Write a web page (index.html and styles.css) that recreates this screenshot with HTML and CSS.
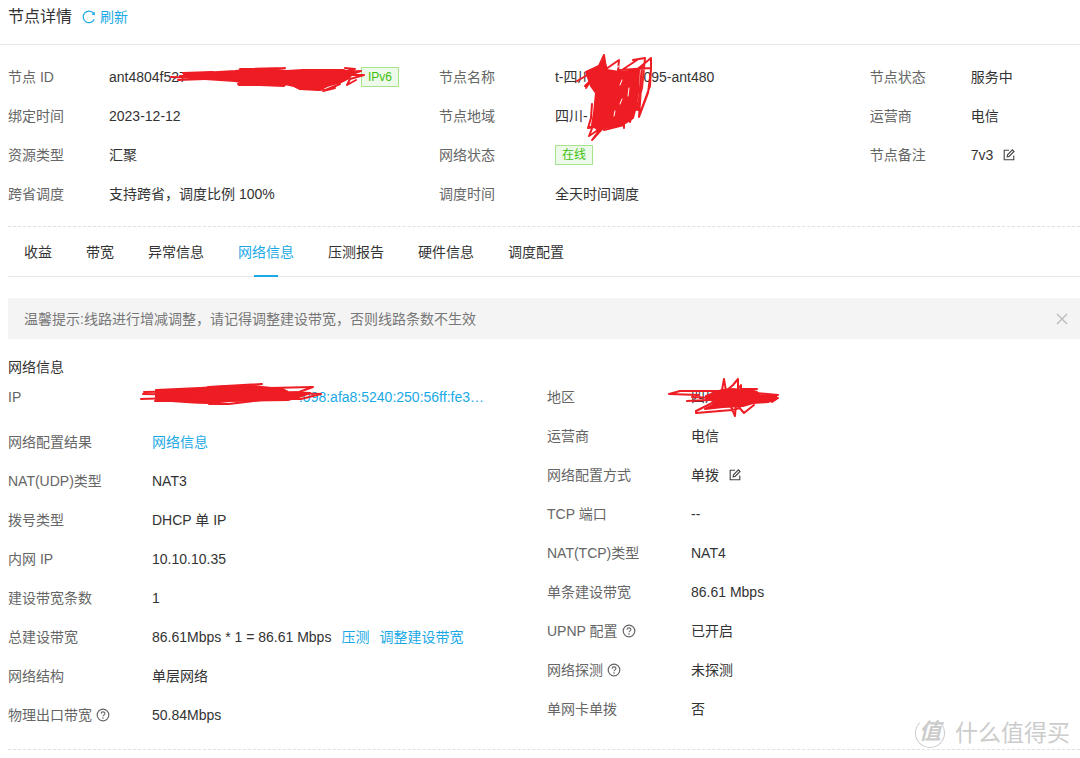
FILE: index.html
```html
<!DOCTYPE html>
<html lang="zh-CN">
<head>
    <meta charset="UTF-8">
    <meta name="viewport" content="width=device-width, initial-scale=1.0">
    <title>节点详情</title>
    <link rel="stylesheet" href="styles.css">
</head>
<body>
    <!-- 公用图标 -->
    <svg class="icons" aria-hidden="true">
        <symbol id="icon-edit" viewBox="0 0 12 12">
            <path d="M6 1.2H1.2v9.6h9.6V6.6M4.2 7.8l.3-2L9.4.9l1.6 1.6-4.9 4.9z" fill="none" stroke="currentColor" stroke-width="1.1"/>
        </symbol>
        <symbol id="icon-help" viewBox="0 0 14 14">
            <circle cx="7" cy="7" r="5.8" fill="none" stroke="currentColor" stroke-width="1.2"/>
            <path d="M5.1 5.7c0-2.5 3.8-2.4 3.8-.2 0 1.4-1.9 1.3-1.9 2.8" fill="none" stroke="currentColor" stroke-width="1.1"/>
            <circle cx="7" cy="10" r=".8" fill="currentColor"/>
        </symbol>
    </svg>

    <div class="page">
        <header class="header">
            <h1>节点详情</h1>
            <button type="button" class="refresh">
                <svg width="14" height="14" viewBox="0 0 14 14"><path d="M12.3 9.2A5.8 5.8 0 1 1 11.6 3.4" fill="none" stroke="currentColor" stroke-width="1.2"/><path d="M12.9 1.6v3.6L9.6 4.5z" fill="currentColor"/></svg>
                刷新
            </button>
        </header>

        <!-- 节点基本信息 -->
        <section class="base">
            <dl>
                <div class="row"><dt>节点 ID</dt><dd>
                    <span class="node-id">ant4804f527<svg class="scribble scribble-id" viewBox="168 60 200 36">
                        <path class="fill" d="M186 74l49-3 10-1 22-1 20 2 16-1 40 0 10 3-4 5-8 4-14 4-8 4-19-1-6-3-14-3-35 0-10-2-45-3-6-3z"/>
                        <path d="M171 77l28 1M183 73l30-1M178 80l54-2M180 76l50-3M240 69l45-1M250 71l35-3M345 68l10 1-12 3 18-1-12 4 15 0-14 4M238 84l46 2M245 82l-6 3 46 0M300 88l25 2 10-2-12 3 17-7-14 6M350 79l-3 6 9-5"/>
                    </svg></span>
                    <span class="tag">IPv6</span>
                </dd></div>
                <div class="row"><dt>绑定时间</dt><dd>2023-12-12</dd></div>
                <div class="row"><dt>资源类型</dt><dd>汇聚</dd></div>
                <div class="row"><dt>跨省调度</dt><dd>支持跨省，调度比例 100%</dd></div>
            </dl>
            <dl class="base-name">
                <div class="row"><dt>节点名称</dt><dd>
                    <span class="node-name"><span>t-四川</span><span>095-ant480</span><svg class="scribble scribble-name" viewBox="575 52 80 92">
                        <path class="fill" d="M586 72l13-6 5-6 3 10 12 2 20-2-1 22-3 18-2 8-6 4-6 3-10 2-14 2-5-4 2-12 2-20-5-7z"/>
                        <path d="M577 81l14-8 8-7 5-11 2 14 13-9-1 11M586 88l6-9-7 7M592 104l-1 14-3 10 5-2-4 10 12-8-9 12 11-12M619 70l32-2-1 18-11 30M634 72l17-14 0 12-3 23-9 24 2-29M633 60l12-2-3 30-6 22M619 72l18-12M642 66l-4 44M588 128l22-3M604 130l20-5-1-8M624 106v22M630 122l4-16"/>
                        <path class="gap" d="M619 66l-3 2M622 80l-2 5M622 99l-2 5M614 116l1-5M629 88l-1 8"/>
                    </svg></span>
                </dd></div>
                <div class="row"><dt>节点地域</dt><dd>四川-</dd></div>
                <div class="row"><dt>网络状态</dt><dd><span class="tag">在线</span></dd></div>
                <div class="row"><dt>调度时间</dt><dd>全天时间调度</dd></div>
            </dl>
            <dl>
                <div class="row"><dt>节点状态</dt><dd>服务中</dd></div>
                <div class="row"><dt>运营商</dt><dd>电信</dd></div>
                <div class="row"><dt>节点备注</dt><dd>7v3 <button type="button" class="edit" aria-label="编辑备注"><svg><use href="#icon-edit"/></svg></button></dd></div>
            </dl>
        </section>

        <!-- 选项卡 -->
        <nav class="tabs">
            <a href="#">收益</a>
            <a href="#">带宽</a>
            <a href="#">异常信息</a>
            <a href="#" class="active">网络信息</a>
            <a href="#">压测报告</a>
            <a href="#">硬件信息</a>
            <a href="#">调度配置</a>
        </nav>

        <div class="tip">
            <p>温馨提示:线路进行增减调整，请记得调整建设带宽，否则线路条数不生效</p>
            <button type="button" aria-label="关闭"><svg width="12" height="12" viewBox="0 0 12 12"><path d="M1 1l10 10M11 1L1 11" stroke="currentColor" stroke-width="1.4"/></svg></button>
        </div>

        <!-- 网络信息 -->
        <section class="network">
            <h2>网络信息</h2>
            <div class="cols">
                <dl>
                    <div class="row row-ip"><dt>IP</dt><dd>
                        <a href="#" class="ip">:098:afa8:5240:250:56ff:fe3…<svg class="scribble scribble-ip" viewBox="138 380 188 28">
                            <path class="fill" d="M156 390l44-2 32-2 30 1 20 2 6 3 22 1-8 3-14 4-58 1-20 2-24-1-30-2z"/>
                            <path d="M144 392l52-1M143 394l52 1M141 399l64-2M155 401l55 0M209 404l20 0 40-5M208 387l54-3-20 3M270 388l43-1-14 5-10 1 32 1-20 5-18 0M186 402l30 1"/>
                        </svg></a>
                    </dd></div>
                    <div class="row"><dt>网络配置结果</dt><dd><a href="#">网络信息</a></dd></div>
                    <div class="row"><dt>NAT(UDP)类型</dt><dd>NAT3</dd></div>
                    <div class="row"><dt>拨号类型</dt><dd>DHCP 单 IP</dd></div>
                    <div class="row"><dt>内网 IP</dt><dd>10.10.10.35</dd></div>
                    <div class="row"><dt>建设带宽条数</dt><dd>1</dd></div>
                    <div class="row"><dt>总建设带宽</dt><dd class="total">86.61Mbps * 1 = 86.61 Mbps <a href="#">压测</a> <a href="#">调整建设带宽</a></dd></div>
                    <div class="row"><dt>网络结构</dt><dd>单层网络</dd></div>
                    <div class="row"><dt>物理出口带宽 <svg class="help"><use href="#icon-help"/></svg></dt><dd>50.84Mbps</dd></div>
                </dl>
                <dl>
                    <div class="row"><dt>地区</dt><dd>
                        <span class="area">四川<svg class="scribble scribble-area" viewBox="666 376 118 42">
                            <path class="fill" d="M706 396l16-6 11-1 8 1 16 2 2 3 17 1 0 3-8 3-15 1-10 3-20 1-18 2 8-4 3-4-10-2z"/>
                            <path d="M720 391l-40 0-11 3 30 1M687 401l22-1M692 397l22 1M722 390l2-11 2 12 7-6 5-6 0 10 3-4 0 4 16 0-12 3 33 3-20 5 20-2-6 4M714 402l-18 9 0 2 36-3 8-2M731 407l4 9 1-12 8 9 10-8M694 391l26 0"/>
                        </svg></span>
                    </dd></div>
                    <div class="row"><dt>运营商</dt><dd>电信</dd></div>
                    <div class="row"><dt>网络配置方式</dt><dd>单拨 <button type="button" class="edit" aria-label="编辑配置方式"><svg><use href="#icon-edit"/></svg></button></dd></div>
                    <div class="row"><dt>TCP 端口</dt><dd>--</dd></div>
                    <div class="row"><dt>NAT(TCP)类型</dt><dd>NAT4</dd></div>
                    <div class="row"><dt>单条建设带宽</dt><dd>86.61 Mbps</dd></div>
                    <div class="row"><dt>UPNP 配置 <svg class="help"><use href="#icon-help"/></svg></dt><dd>已开启</dd></div>
                    <div class="row"><dt>网络探测 <svg class="help"><use href="#icon-help"/></svg></dt><dd>未探测</dd></div>
                    <div class="row"><dt>单网卡单拨</dt><dd>否</dd></div>
                </dl>
            </div>
        </section>

        <!-- 水印 -->
        <div class="watermark"><span class="logo">值</span><span>什么值得买</span></div>
    </div>
</body>
</html>
```
FILE: styles.css
```css
*{
    margin: 0;
    padding: 0;
    box-sizing: border-box;
}
body{
    font-family: "Liberation Sans", "Noto Sans CJK SC", sans-serif;
    font-size: 14px;
    line-height: 20px;
    color: #333;
    background-color: #fff;
}
a{
    color: #1ba9e6;
    text-decoration: none;
}
button{
    border: none;
    background: none;
    font: inherit;
    cursor: pointer;
}
.icons{
    position: absolute;
    width: 0;
    height: 0;
}
.page{
    position: relative;
}

/* 头部 */
.header{
    display: flex;
    align-items: center;
    height: 45px;
    padding: 0 8px 10px;
    border-bottom: 1px solid #e8e8e8;
}
.header h1{
    font-size: 16px;
    font-weight: normal;
}
.refresh{
    display: flex;
    align-items: center;
    gap: 4px;
    margin-left: 10px;
    color: #1ba9e6;
}

/* 基本信息 */
.base{
    display: grid;
    grid-template-columns: 41fr 41fr 20fr;
    margin-left: 8px;
    padding: 12px 0 13px;
    border-bottom: 1px dashed #e0e0e0;
}
.row{
    display: flex;
    align-items: center;
    height: 39px;
    white-space: nowrap;
}
.row dt{
    display: flex;
    align-items: center;
    gap: 4px;
    flex: none;
    width: 101px;
    color: #666;
}
.row dd{
    display: flex;
    align-items: center;
}
.base-name dt{
    width: 116px;
}
.tag{
    height: 20px;
    padding: 0 6px;
    font-size: 12px;
    line-height: 18px;
    color: #3fbf0f;
    background-color: #eefae9;
    border: 1px solid #a5e38c;
}
.edit{
    display: flex;
    margin-left: 10px;
    color: #444;
}
.edit svg{
    width: 12px;
    height: 12px;
}
.help{
    width: 14px;
    height: 14px;
}

/* 涂抹 */
.scribble{
    position: absolute;
    fill: none;
    stroke: #ee1c23;
    stroke-width: 2;
    stroke-linecap: round;
    stroke-linejoin: round;
}
.scribble .fill{
    fill: #ee1c23;
}
.scribble .gap{
    stroke: #fff;
    stroke-width: 1;
}
.node-id,
.node-name,
.ip,
.area{
    position: relative;
}
.node-id{
    width: 252px;
}
.node-name{
    display: flex;
    gap: 52px;
}
.ip{
    width: 332px;
    text-align: right;
}
.scribble-id{
    top: -7px;
    left: 59px;
    width: 200px;
    height: 36px;
}
.scribble-name{
    top: -15px;
    left: 20px;
    width: 80px;
    height: 92px;
}
.scribble-ip{
    top: -7px;
    left: -14px;
    width: 188px;
    height: 28px;
}
.scribble-area{
    top: -11px;
    left: -25px;
    width: 118px;
    height: 42px;
}

/* 选项卡 */
.tabs{
    display: flex;
    gap: 34px;
    margin-left: 8px;
    padding-left: 16px;
    border-bottom: 1px solid #e8e8e8;
}
.tabs a{
    position: relative;
    height: 49px;
    line-height: 50px;
    color: #333;
}
.tabs .active{
    color: #1ba9e6;
}
.tabs .active::after{
    content: "";
    position: absolute;
    left: 50%;
    bottom: -1px;
    width: 24px;
    height: 2px;
    margin-left: -12px;
    background-color: #1ba9e6;
}

/* 提示 */
.tip{
    display: flex;
    justify-content: space-between;
    align-items: center;
    height: 41px;
    margin: 21px 0 18px 8px;
    padding: 0 12px 0 16px;
    color: #777;
    background-color: #f4f4f4;
}
.tip button{
    display: flex;
    color: #bbb;
}

/* 网络信息 */
.network{
    margin-left: 8px;
    padding-bottom: 15px;
    border-bottom: 1px dashed #e0e0e0;
}
.network h2{
    font-size: 14px;
    font-weight: normal;
}
.cols{
    display: grid;
    grid-template-columns: 1fr 1fr;
    gap: 6px;
}
.cols dt{
    width: 144px;
}
.cols .row-ip{
    margin-bottom: 6px;
}
.total{
    gap: 10px;
}

.watermark{
    position: absolute;
    right: 10px;
    bottom: 2px;
    display: flex;
    align-items: center;
    gap: 10px;
    font-size: 23px;
    line-height: 30px;
    color: #ccc;
}
.logo{
    width: 30px;
    height: 30px;
    border: 1px solid #ccc;
    border-top-color: transparent;
    border-radius: 50%;
    font-size: 22px;
    line-height: 26px;
    text-align: center;
    font-weight: bold;
    font-style: italic;
}
```
